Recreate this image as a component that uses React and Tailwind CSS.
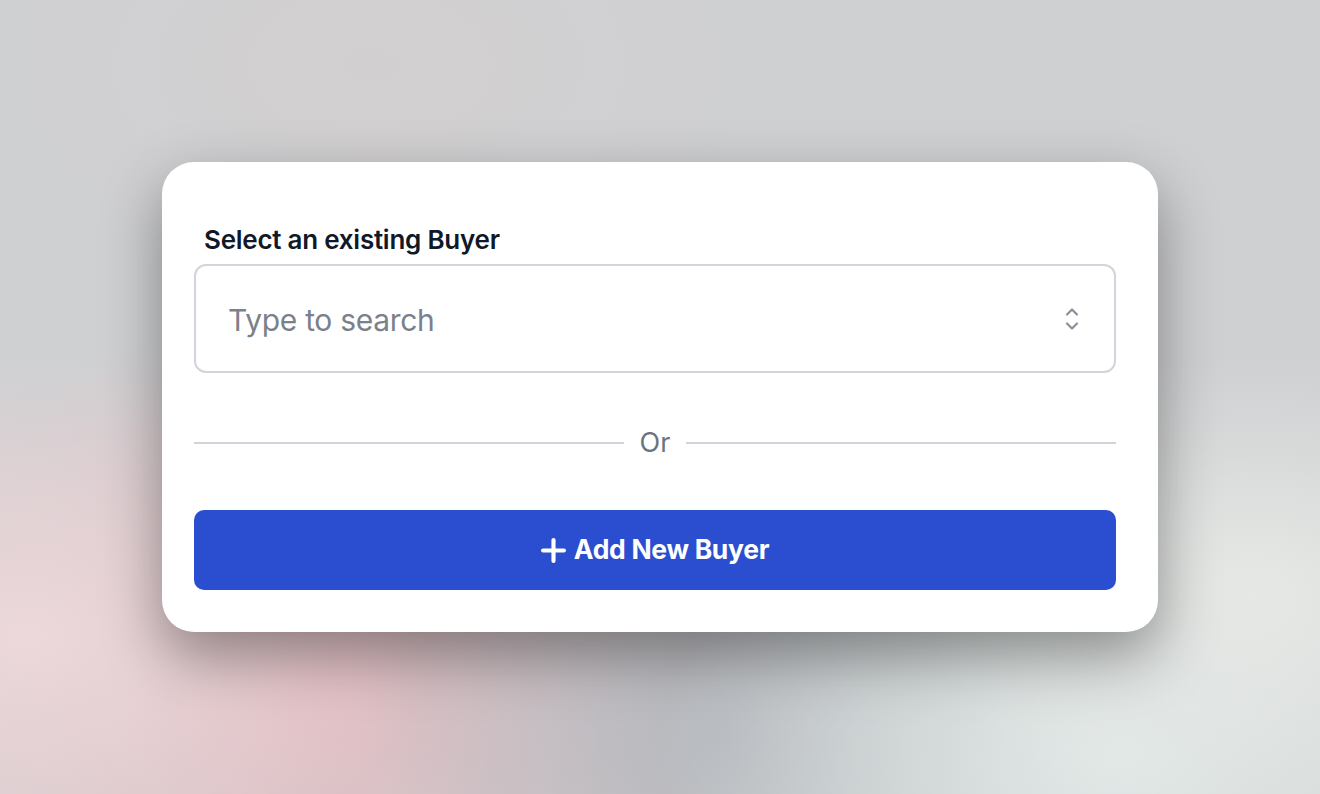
import React from "react";

export default function App() {
  return (
    <div
      className="relative w-full h-[794px] overflow-hidden flex items-center justify-center bg-[#cfd0d2]"
      style={{ fontFamily: "Inter, 'Noto Sans', sans-serif" }}
    >
      <div className="absolute inset-0 bg-[radial-gradient(ellipse_40%_45%_at_24%_86%,#e2bcc1_0%,rgba(226,188,193,0)_100%)]" />
      <div className="absolute inset-0 bg-[radial-gradient(ellipse_30%_35%_at_2%_80%,#ecd8da_0%,rgba(236,216,218,0)_100%)]" />
      <div className="absolute inset-0 bg-[radial-gradient(ellipse_28%_40%_at_55%_92%,#b3b7bc_0%,rgba(179,183,188,0)_100%)]" />
      <div className="absolute inset-0 bg-[radial-gradient(ellipse_35%_40%_at_85%_95%,#e0e8e6_0%,rgba(224,232,230,0)_100%)]" />
      <div className="absolute inset-0 bg-[radial-gradient(ellipse_25%_30%_at_95%_75%,#e6e8e5_0%,rgba(230,232,229,0)_100%)]" />
      <div className="absolute inset-0 bg-[radial-gradient(ellipse_30%_30%_at_28%_8%,#d2cfd0_0%,rgba(210,207,208,0)_100%)]" />

      <div className="relative w-[996px] h-[470px] bg-white rounded-[32px] shadow-[0_24px_60px_rgba(0,0,0,0.38)] pl-8 pr-[42px] pt-[62px] flex flex-col">
        <label className="pl-[10px] text-[26px] leading-8 font-semibold text-[#111827] tracking-[-0.25px]">
          Select an existing Buyer
        </label>
        <div className="mt-2 h-[109px] border-2 border-[#d1d5db] rounded-[12px] flex items-center justify-between pl-[32px] pr-[33px]">
          <span className="text-[30px] text-[#7b818c] tracking-[-0.3px] translate-y-[2px]">Type to search</span>
          <svg width="18" height="28" viewBox="0 0 18 28" fill="none" stroke="#8a909a" strokeWidth="2.2" strokeLinecap="round" strokeLinejoin="round">
            <path d="M4 9.5 L9 4.5 L14 9.5" />
            <path d="M4 18.5 L9 23.5 L14 18.5" />
          </svg>
        </div>
        <div className="mt-[58px] h-6 flex items-center">
          <div className="flex-1 h-[2px] bg-[#d1d5db]" />
          <span className="px-4 text-[27px] leading-6 text-[#6b7280]">Or</span>
          <div className="flex-1 h-[2px] bg-[#d1d5db]" />
        </div>
        <button className="mt-[55px] h-20 w-full rounded-[10px] bg-[#2b4ed0] flex items-center justify-center gap-[8px] text-white text-[26.5px] font-bold tracking-[-0.3px]">
          <svg width="25" height="25" viewBox="0 0 24 24" fill="none" stroke="white" strokeWidth="4" strokeLinecap="round">
            <path d="M12 2 V22" />
            <path d="M2 12 H22" />
          </svg>
          Add New Buyer
        </button>
      </div>
    </div>
  );
}
